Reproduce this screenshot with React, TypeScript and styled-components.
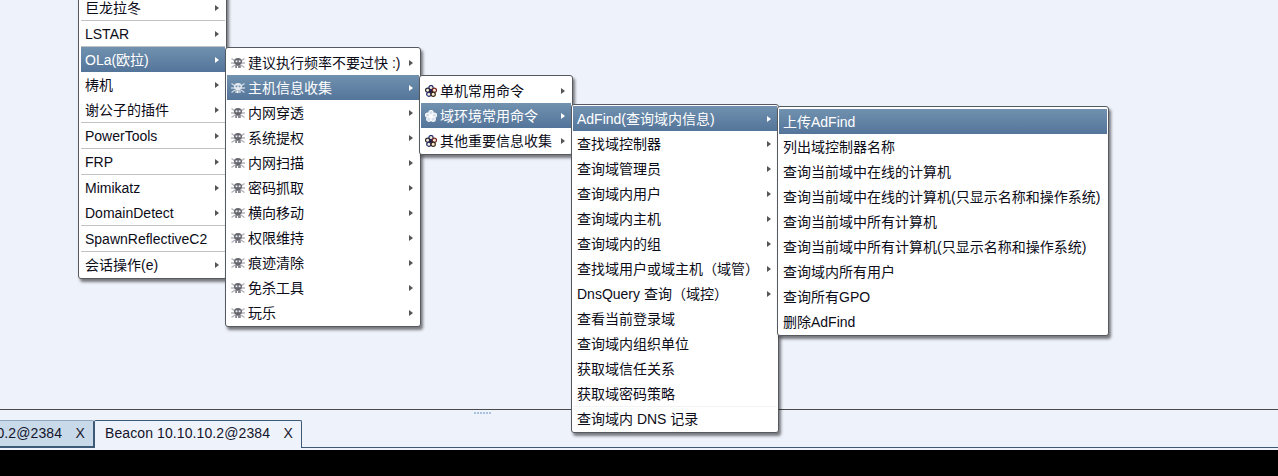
import React from 'react';
import styled, { createGlobalStyle } from 'styled-components';

const GlobalStyle = createGlobalStyle`
  html, body {
    margin: 0;
    padding: 0;
    background: #000;
  }
  body {
    font-family: "Liberation Sans", "Noto Sans CJK SC", sans-serif;
    font-size: 14px;
  }
`;

const Page = styled.div`
  position: relative;
  width: 1278px;
  height: 476px;
  overflow: hidden;
  display: flex;
  flex-direction: column;
  background: #eef2fb;
`;

const Workspace = styled.div`
  height: 409px;
  border-bottom: 1px solid #4a4a4a;
`;

const Splitter = styled.div`
  height: 10px;
  padding: 2px 0 0 474px;
  box-sizing: border-box;
`;

const Grip = styled.div`
  width: 18px;
  height: 3px;
  background-image: radial-gradient(circle at 1px 1px, #a9c2e0 1px, transparent 1px);
  background-size: 3px 3px;
`;

const TabBar = styled.div`
  height: 28px;
  display: flex;
  align-items: stretch;
  border-bottom: 1px solid #3c5a78;
  box-sizing: border-box;
`;

const Tab = styled.div<{ $active?: boolean }>`
  flex: none;
  width: 208px;
  box-sizing: border-box;
  display: flex;
  justify-content: space-between;
  padding: 2px 8px 0 10px;
  line-height: 20px;
  letter-spacing: 0.1px;
  color: #14142a;
  background: ${p => (p.$active ? '#eef2fb' : '#c8d9ea')};
  border: 1px solid #3c5a78;
  border-top-color: ${p => (p.$active ? '#3c5a78' : '#8fa6bf')};
  border-bottom: ${p => (p.$active ? 'none' : '1px solid #3c5a78')};
  border-radius: 2px 2px 0 0;
  margin-bottom: ${p => (p.$active ? '-1px' : '0')};
  &:first-child {
    margin-left: -114px;
  }
`;

const TabClose = styled.span`
  color: #1a1a2e;
`;

const BottomStrip = styled.div`
  flex: 1;
  margin-top: 2px;
  background: #000;
`;

const Menu = styled.div<{ $left: number; $top: number; $width: number; $padTop?: number; $padLeft?: number; $z: number }>`
  position: absolute;
  left: ${p => p.$left}px;
  top: ${p => p.$top}px;
  width: ${p => p.$width}px;
  z-index: ${p => p.$z};
  box-sizing: border-box;
  padding: ${p => p.$padTop ?? 2}px 1px 1px ${p => p.$padLeft ?? 1}px;
  background: #fff;
  border: 1px solid #555a60;
  border-radius: 3px;
  box-shadow: 2px 3px 3px rgba(0, 0, 0, 0.5);
`;

const Row = styled.div<{ $selected?: boolean; $rule?: boolean }>`
  height: 25px;
  display: flex;
  align-items: center;
  padding: 0 6px 0 4px;
  white-space: nowrap;
  color: ${p => (p.$selected ? '#fff' : '#0c0c18')};
  background: ${p => (p.$selected ? 'linear-gradient(#7191af, #54759a)' : 'transparent')};
  box-shadow: ${p => (p.$rule ? 'inset 0 1px 0 #f3f3f3' : 'none')};
`;

const Label = styled.span`
  flex: 1;
  padding-top: 2px;
  line-height: 23px;
`;

const Separator = styled.div`
  height: 1px;
  background: #c2c2c2;
`;

const Arrow = styled.i<{ $selected?: boolean }>`
  flex: none;
  width: 0;
  height: 0;
  border-style: solid;
  border-width: 3.5px 0 3.5px 4px;
  border-color: transparent transparent transparent ${p => (p.$selected ? '#fff' : '#555')};
`;

const IconSlot = styled.span<{ $width: number }>`
  flex: none;
  width: ${p => p.$width}px;
  margin-right: 3px;
  display: flex;
  justify-content: center;
`;

const SpiderIcon = ({ selected }: { selected?: boolean }) => {
  const skull = selected ? '#e4eaf1' : '#66666c';
  const bone = selected ? '#c9d4df' : '#b4b4bc';
  return (
    <svg width="14" height="12" viewBox="0 0 14 12">
      <path d="M0.5 1.5 L4 4 M0 6 L4 6 M0.5 10.5 L4 8 M13.5 1.5 L10 4 M14 6 L10 6 M13.5 10.5 L10 8" stroke={bone} strokeWidth="1.5" fill="none" />
      <ellipse cx="7" cy="4.6" rx="4" ry="3.6" fill={skull} />
      <rect x="4.2" y="8" width="5.6" height="3" fill={selected ? '#b8c6d4' : '#85858d'} />
      <rect x="4.6" y="3.4" width="1.8" height="1.8" fill={selected ? '#7e9ab6' : '#e8eef8'} />
      <rect x="7.7" y="3.4" width="1.8" height="1.8" fill={selected ? '#7e9ab6' : '#e8eef8'} />
      <rect x="6" y="9" width="1" height="2" fill="#fff" />
    </svg>
  );
};

const petals = [
  { cx: 6, cy: 2.6, dark: '#1c2a6e' },
  { cx: 2.6, cy: 5.2, dark: '#2a2a30' },
  { cx: 9.4, cy: 5.2, dark: '#7a2a22' },
  { cx: 3.8, cy: 9.2, dark: '#1c2a6e' },
  { cx: 8.2, cy: 9.2, dark: '#3a2a12' },
];

const FlowerIcon = ({ selected }: { selected?: boolean }) => (
  <svg width="12" height="12" viewBox="0 0 12 12">
    {petals.map((p, i) => (
      <circle
        key={i}
        cx={p.cx}
        cy={p.cy}
        r="2.1"
        fill={selected ? '#d4deea' : '#f6ead8'}
        stroke={selected ? '#f6f8fb' : p.dark}
        strokeWidth="1.2"
      />
    ))}
    <circle cx="6" cy="6.2" r="1.5" fill={selected ? '#fff' : '#2a1c3c'} />
  </svg>
);

type Entry = { label: string; sub?: boolean; selected?: boolean; sep?: boolean; rule?: boolean };

const pluginMenu: Entry[] = [
  { label: '巨龙拉冬', sub: true },
  { label: '', sep: true },
  { label: 'LSTAR', sub: true },
  { label: '', sep: true },
  { label: 'OLa(欧拉)', sub: true, selected: true },
  { label: '梼机', sub: true },
  { label: '谢公子的插件', sub: true },
  { label: '', sep: true },
  { label: 'PowerTools', sub: true },
  { label: '', sep: true },
  { label: 'FRP', sub: true },
  { label: '', sep: true },
  { label: 'Mimikatz', sub: true },
  { label: 'DomainDetect', sub: true },
  { label: '', sep: true },
  { label: 'SpawnReflectiveC2' },
  { label: '', sep: true },
  { label: '会话操作(e)', sub: true },
];

const olaMenu: Entry[] = [
  { label: '建议执行频率不要过快 :)', sub: true },
  { label: '主机信息收集', sub: true, selected: true },
  { label: '内网穿透', sub: true },
  { label: '系统提权', sub: true },
  { label: '内网扫描', sub: true },
  { label: '密码抓取', sub: true },
  { label: '横向移动', sub: true },
  { label: '权限维持', sub: true },
  { label: '痕迹清除', sub: true },
  { label: '免杀工具', sub: true },
  { label: '玩乐', sub: true },
];

const hostMenu: Entry[] = [
  { label: '单机常用命令', sub: true },
  { label: '域环境常用命令', sub: true, selected: true },
  { label: '其他重要信息收集', sub: true },
];

const domainMenu: Entry[] = [
  { label: 'AdFind(查询域内信息)', sub: true, selected: true },
  { label: '查找域控制器', sub: true },
  { label: '查询域管理员', sub: true },
  { label: '查询域内用户', sub: true },
  { label: '查询域内主机', sub: true },
  { label: '查询域内的组', sub: true },
  { label: '查找域用户或域主机（域管）', sub: true },
  { label: 'DnsQuery 查询（域控）', sub: true },
  { label: '查看当前登录域' },
  { label: '查询域内组织单位' },
  { label: '获取域信任关系' },
  { label: '获取域密码策略' },
  { label: '查询域内 DNS 记录', rule: true },
];

const adFindMenu: Entry[] = [
  { label: '上传AdFind', selected: true },
  { label: '列出域控制器名称' },
  { label: '查询当前域中在线的计算机' },
  { label: '查询当前域中在线的计算机(只显示名称和操作系统)' },
  { label: '查询当前域中所有计算机' },
  { label: '查询当前域中所有计算机(只显示名称和操作系统)' },
  { label: '查询域内所有用户' },
  { label: '查询所有GPO' },
  { label: '删除AdFind' },
];

const renderRows = (entries: Entry[], icon?: 'spider' | 'flower') =>
  entries.map((entry, i) =>
    entry.sep ? (
      <Separator key={i} />
    ) : (
      <Row key={i} $selected={entry.selected} $rule={entry.rule}>
        {icon === 'spider' && (
          <IconSlot $width={14}>
            <SpiderIcon selected={entry.selected} />
          </IconSlot>
        )}
        {icon === 'flower' && (
          <IconSlot $width={12}>
            <FlowerIcon selected={entry.selected} />
          </IconSlot>
        )}
        <Label>{entry.label}</Label>
        {entry.sub && <Arrow $selected={entry.selected} />}
      </Row>
    )
  );

const App: React.FC = () => (
  <Page>
    <GlobalStyle />
    <Workspace />
    <Splitter>
      <Grip />
    </Splitter>
    <TabBar>
      <Tab>
        <span>Beacon 10.10.10.2@2384</span>
        <TabClose>X</TabClose>
      </Tab>
      <Tab $active>
        <span>Beacon 10.10.10.2@2384</span>
        <TabClose>X</TabClose>
      </Tab>
    </TabBar>
    <BottomStrip />

    <Menu $left={78} $top={-8} $width={149} $padLeft={2} $z={1}>
      {renderRows(pluginMenu)}
    </Menu>
    <Menu $left={225} $top={47} $width={196} $z={2}>
      {renderRows(olaMenu, 'spider')}
    </Menu>
    <Menu $left={419} $top={75} $width={154} $z={3}>
      {renderRows(hostMenu, 'flower')}
    </Menu>
    <Menu $left={571} $top={104} $width={208} $padTop={1} $z={4}>
      {renderRows(domainMenu)}
    </Menu>
    <Menu $left={777} $top={106} $width={332} $z={5}>
      {renderRows(adFindMenu)}
    </Menu>
  </Page>
);

export default App;
